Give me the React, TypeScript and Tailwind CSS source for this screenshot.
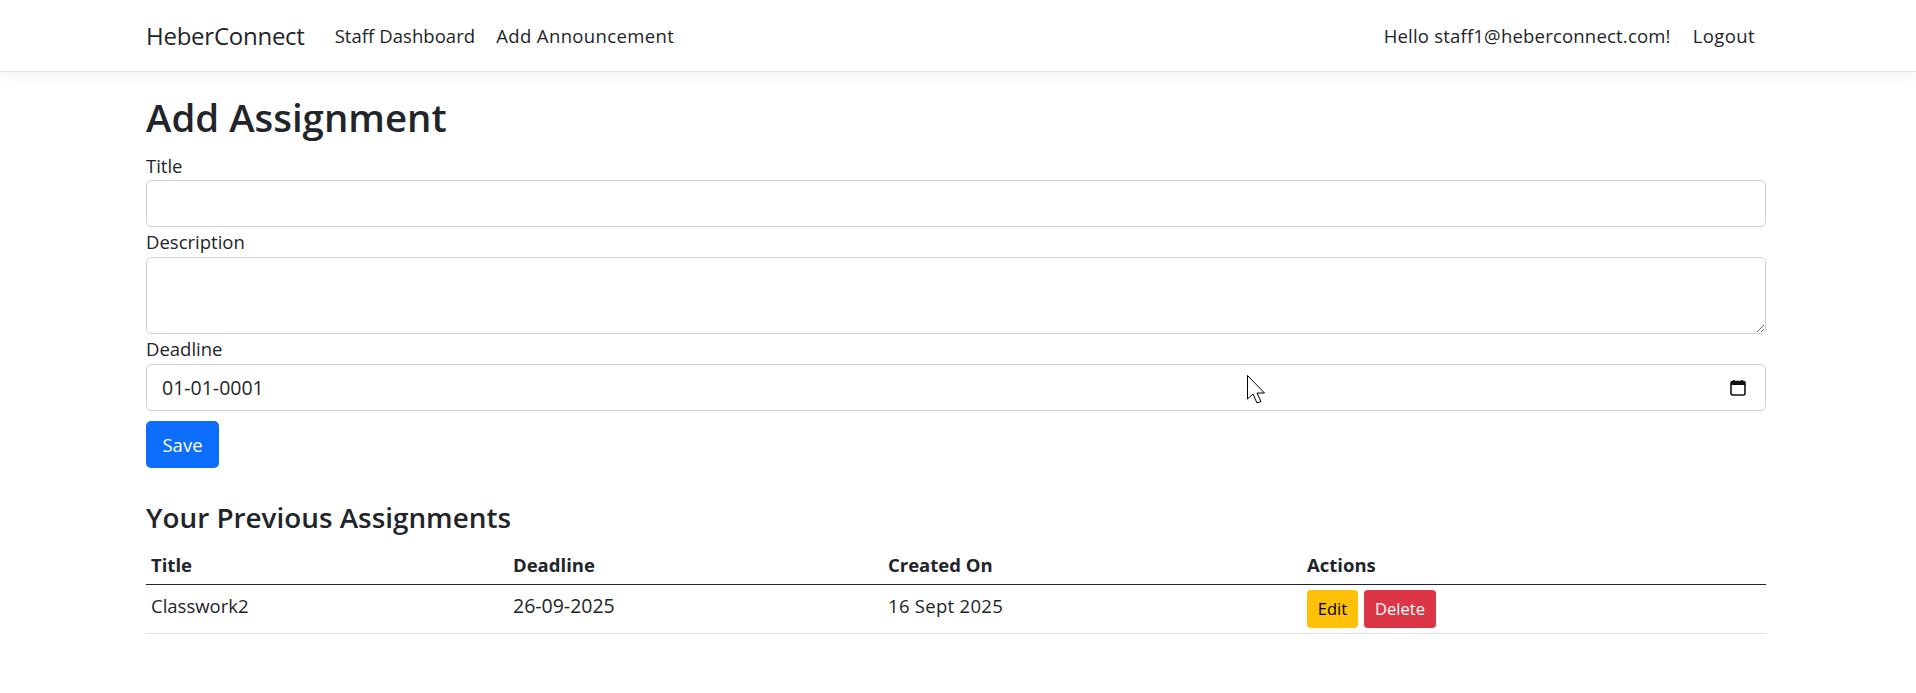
export default function App() {
  const font = "font-['Open_Sans','Noto_Sans',sans-serif]";
  return (
    <div className={`min-h-[693px] bg-white text-[18.5px] leading-[29px] text-[#212529] ${font}`}>
      <nav className="flex h-[72px] items-center border-b border-[#e4e5e6] bg-white pl-[146px] pr-[150px] shadow-[0_5px_15px_rgba(0,0,0,0.05)]">
        <a className="mr-[30px] text-[24px] tracking-[-0.25px]">HeberConnect</a>
        <a className="mr-[21px] tracking-[0.05px]">Staff Dashboard</a>
        <a className="tracking-[0.38px]">Add Announcement</a>
        <span className="ml-auto mr-[22px] tracking-[0.2px]">Hello staff1@heberconnect.com!</span>
        <a className="mr-[11px] tracking-[0.4px]">Logout</a>
      </nav>
      <main className="pl-[146px] pr-[150px]">
        <h2 className="mt-[21px] text-[38.4px] font-semibold leading-[48px]">Add Assignment</h2>
        <form className="mt-[11px]">
          <label className="block h-[28px] leading-[28px]">Title</label>
          <input className="block h-[47px] w-full rounded-[5px] border border-[#ced4da] bg-white" />
          <label className="block h-[30px] leading-[30px]">Description</label>
          <textarea className="block h-[77px] w-full rounded-[5px] border border-[#ced4da] bg-white" />
          <label className="block h-[30px] leading-[30px]">Deadline</label>
          <div className="flex h-[47px] w-full items-center justify-between rounded-[5px] border border-[#ced4da] bg-white pl-[15px] pr-[19px]">
            <span className="text-[19.5px]">01-01-0001</span>
            <svg viewBox="0 0 16 16" className="h-[16px] w-[16px]" fill="none">
              <rect x="1" y="1.5" width="14" height="13.5" rx="1.5" stroke="#111" strokeWidth="1.6" />
              <path d="M1 1.5h14V5H1z" fill="#111" />
              <path d="M4 0v2M12 0v2" stroke="#111" strokeWidth="1.6" />
            </svg>
          </div>
          <button type="button" className="mt-[10px] block h-[47px] w-[73px] rounded-[5px] bg-[#0d6efd] text-white">Save</button>
        </form>
        <h4 className="mt-[31px] text-[27.85px] font-semibold leading-[36px]">Your Previous Assignments</h4>
        <table className="mt-[10px] w-full table-fixed border-collapse text-left">
          <thead>
            <tr className="h-[39px] border-b border-[#212529] align-middle">
              <th className="w-[362px] px-[5px] font-bold">Title</th>
              <th className="w-[375px] px-[5px] font-bold">Deadline</th>
              <th className="w-[419px] px-[5px] font-bold">Created On</th>
              <th className="px-[5px] font-bold">Actions</th>
            </tr>
          </thead>
          <tbody>
            <tr className="h-[49px] border-b border-[#dee2e6] align-top">
              <td className="px-[5px] pt-[6px]">Classwork2</td>
              <td className="px-[5px] pt-[6px] text-[19.5px]">26-09-2025</td>
              <td className="px-[5px] pt-[6px] tracking-[0.3px]">16 Sept 2025</td>
              <td className="px-[5px] pt-[5px]">
                <div className="flex gap-[6px]">
                  <button type="button" className="h-[38px] w-[51px] rounded-[4px] bg-[#ffc107] text-[16.5px] text-black">Edit</button>
                  <button type="button" className="h-[38px] w-[72px] rounded-[4px] bg-[#dc3545] text-[16.5px] text-white">Delete</button>
                </div>
              </td>
            </tr>
          </tbody>
        </table>
      </main>
      <svg viewBox="0 0 18 30" className="absolute left-[1247px] top-[375px] h-[30px] w-[18px]">
        <path d="M0.5 0.5V24L6 19l4 9 4-1.5-4-8.5h7.5z" fill="white" stroke="black" strokeWidth="1" />
      </svg>
    </div>
  );
}
